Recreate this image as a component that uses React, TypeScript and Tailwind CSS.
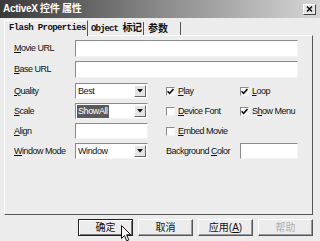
import React from 'react';

const sans = { fontFamily: '"Liberation Sans", Arial, "Noto Sans CJK SC", sans-serif' };
const cjk = { fontFamily: '"Liberation Sans", "Noto Sans CJK SC", sans-serif' };
const mono = { fontFamily: '"Liberation Mono", "Courier New", "Noto Sans CJK SC", monospace' };

function Label({ pre = '', u, rest, w }: { pre?: string; u: string; rest: string; w: string }) {
  return (
    <div className={`${w} shrink-0 text-[9px] tracking-[-0.5px] text-[#111] leading-none whitespace-nowrap`}>
      {pre}
      <span className="underline">{u}</span>
      {rest}
    </div>
  );
}

function Input({ w }: { w: string }) {
  return (
    <div className={`${w} h-full bg-white border border-t-[#8a8a8a] border-l-[#8a8a8a] border-b-[#f4f4f4] border-r-[#f4f4f4]`} />
  );
}

function Select({ value, selected = false }: { value: string; selected?: boolean }) {
  return (
    <div className="w-[73px] h-full bg-white border border-t-[#8a8a8a] border-l-[#8a8a8a] border-b-[#f4f4f4] border-r-[#f4f4f4] flex items-center pl-[1px] pr-[1px]">
      <div className="flex-1 flex items-center h-full">
        <span className={`text-[9px] tracking-[-0.4px] leading-none px-[1px] py-[2px] ${selected ? 'bg-[#5a5a5a] text-white' : 'text-[#111]'}`}>
          {value}
        </span>
      </div>
      <div className="w-[12px] h-[12px] bg-[#e4e4e4] border border-t-white border-l-white border-b-[#666] border-r-[#666] flex items-center justify-center">
        <svg width="6" height="4" viewBox="0 0 6 4">
          <path d="M0 0h6L3 3.5z" fill="#111" />
        </svg>
      </div>
    </div>
  );
}

function Check({ checked, pre = '', u, rest, w }: { checked: boolean; pre?: string; u: string; rest: string; w?: string }) {
  return (
    <div className={`${w ?? ''} shrink-0 flex items-center gap-[3px]`}>
      <div className="w-[9px] h-[9px] bg-[#fafafa] border border-t-[#8a8a8a] border-l-[#8a8a8a] border-b-[#f4f4f4] border-r-[#f4f4f4] flex items-center justify-center">
        {checked && (
          <svg width="7" height="7" viewBox="0 0 7 7">
            <path d="M0.5 3.2L2.6 5.4L6.5 1" stroke="#111" strokeWidth="1.6" fill="none" />
          </svg>
        )}
      </div>
      <span className="text-[9px] tracking-[-0.5px] text-[#111] leading-none whitespace-nowrap">
        {pre}
        <span className="underline">{u}</span>
        {rest}
      </span>
    </div>
  );
}

function Btn({ children, def = false, disabled = false }: { children: React.ReactNode; def?: boolean; disabled?: boolean }) {
  return (
    <div
      className={`w-[55px] h-[17px] flex items-center justify-center text-[10px] leading-none bg-[#ececec] whitespace-nowrap ${
        def
          ? 'border border-[#222] shadow-[inset_1px_1px_0_#fff,inset_-1px_-1px_0_#777]'
          : 'border border-t-white border-l-white border-b-[#555] border-r-[#555] shadow-[inset_-1px_-1px_0_#999]'
      } ${disabled ? 'text-[#b0b0b0]' : 'text-[#111]'}`}
      style={cjk}
    >
      {children}
    </div>
  );
}

export default function App() {
  return (
    <div className="w-[320px] h-[241px] bg-[#ececec] flex flex-col relative overflow-hidden" style={sans}>
      {/* title bar */}
      <div className="h-[18px] shrink-0 bg-gradient-to-r from-[#3a3a3a] via-[#8a8a8a] to-[#d6d6d6] flex items-center justify-between pl-[3px] pr-[4px]">
        <span className="text-white font-bold text-[10px] tracking-[-0.3px] leading-none whitespace-nowrap" style={cjk}>
          ActiveX 控件 属性
        </span>
        <div className="w-[13px] h-[11px] bg-[#e6e6e6] border border-t-white border-l-white border-b-[#444] border-r-[#444] flex items-center justify-center">
          <svg width="7" height="6" viewBox="0 0 7 6">
            <path d="M1 0.5L6 5.5M6 0.5L1 5.5" stroke="#111" strokeWidth="1.5" />
          </svg>
        </div>
      </div>

      {/* tabs */}
      <div className="h-[16px] shrink-0 flex items-end pl-[4px] mt-[1px]">
        <div className="w-[84px] h-[16px] border-t border-l border-t-white border-l-white border-r border-r-[#555] flex items-center pl-[4px] relative z-10 bg-[#ececec] -mb-[1px]">
          <span className="text-[9px] font-bold tracking-[-0.6px] leading-none text-[#111] whitespace-nowrap" style={mono}>
            Flash Properties
          </span>
        </div>
        <div className="w-[56px] h-[13px] border-r border-r-[#555] flex items-center pl-[3px]">
          <span className="text-[9px] font-bold tracking-[-0.9px] leading-none text-[#111] whitespace-nowrap" style={mono}>
            Object <span style={cjk} className="text-[10px] tracking-[-0.5px]">标记</span>
          </span>
        </div>
        <div className="w-[37px] h-[13px] border-r border-r-[#555] flex items-center pl-[4px]">
          <span className="text-[10px] font-bold leading-none text-[#111] whitespace-nowrap" style={cjk}>
            参数
          </span>
        </div>
      </div>

      {/* panel */}
      <div className="ml-[4px] mr-[7px] h-[180px] shrink-0 border border-t-white border-l-white border-r-[#555] border-b-[#555] pl-[9px] pt-[4px] flex flex-col">
        <div className="h-[17px] flex items-center">
          <Label u="M" rest="ovie URL" w="w-[61px]" />
          <Input w="w-[223px]" />
        </div>
        <div className="h-[17px] mt-[4px] flex items-center">
          <Label u="B" rest="ase URL" w="w-[61px]" />
          <Input w="w-[223px]" />
        </div>
        <div className="h-[16px] mt-[5px] flex items-center">
          <Label u="Q" rest="uality" w="w-[61px]" />
          <Select value="Best" />
          <div className="w-[18px]" />
          <Check checked u="P" rest="lay" w="w-[74px]" />
          <Check checked u="L" rest="oop" />
        </div>
        <div className="h-[16px] mt-[4px] flex items-center">
          <Label u="S" rest="cale" w="w-[61px]" />
          <Select value="ShowAll" selected />
          <div className="w-[18px]" />
          <Check checked={false} u="D" rest="evice Font" w="w-[74px]" />
          <Check checked pre="S" u="h" rest="ow Menu" />
        </div>
        <div className="h-[16px] mt-[4px] flex items-center">
          <Label u="A" rest="lign" w="w-[61px]" />
          <Input w="w-[73px]" />
          <div className="w-[18px]" />
          <Check checked={false} u="E" rest="mbed Movie" />
        </div>
        <div className="h-[16px] mt-[4px] flex items-center">
          <Label u="W" rest="indow Mode" w="w-[61px]" />
          <Select value="Window" />
          <div className="w-[18px]" />
          <Label pre="Background " u="C" rest="olor" w="w-[74px]" />
          <Input w="w-[58px]" />
        </div>
      </div>

      {/* buttons */}
      <div className="flex gap-[5px] pl-[78px] mt-[4px]">
        <Btn def>确定</Btn>
        <Btn>取消</Btn>
        <Btn>
          应用(<span className="underline">A</span>)
        </Btn>
        <Btn disabled>帮助</Btn>
      </div>

      {/* mouse cursor */}
      <svg className="absolute left-[121px] top-[225px]" width="11" height="17" viewBox="0 0 11 17">
        <path d="M0.5 0.5V13.5L3.5 10.5L5.7 15.8L7.8 14.9L5.6 9.8H9.8Z" fill="#fff" stroke="#111" strokeWidth="1" />
      </svg>
    </div>
  );
}
